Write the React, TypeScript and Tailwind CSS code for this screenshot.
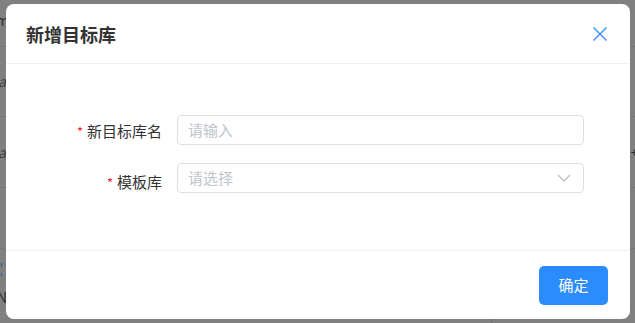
import React from "react";

export default function App() {
  const font = { fontFamily: '"Noto Sans CJK SC", "Noto Sans", sans-serif' };
  return (
    <div
      className="relative w-[635px] h-[323px] overflow-hidden bg-[#808080]"
      style={font}
    >
      {/* background page (behind overlay) */}
      <div className="flex flex-col w-full">
        <div className="h-[47px] border-b border-[#747474] flex items-start pt-[10px]">
          <span className="ml-[-4px] text-[14px] text-[#2e2e2e]">m</span>
          <div className="ml-auto mr-[143px] h-[47px] border-l border-[#747474]" />
        </div>
        <div className="h-[70px] border-b border-[#747474] flex items-center">
          <span className="ml-[-2px] text-[14px] text-[#3a3a3a] italic">a</span>
        </div>
        <div className="h-[71px] border-b border-[#747474] flex items-center justify-between">
          <span className="ml-[-2px] text-[14px] text-[#3a3a3a] italic">a</span>
          <span className="mr-[-3px] text-[13px] text-[#2e2e2e]">+</span>
        </div>
        <div className="h-[61px] border-b border-[#747474]" />
        <div className="h-[74px] relative flex flex-col">
          <span className="mt-[14px] ml-[1px] w-[1px] h-[4px] bg-[#2d5a8a]" />
          <span className="mt-[6px] ml-[1px] w-[1px] h-[3px] bg-[#2d5a8a]" />
          <span className="mt-[14px] ml-[-3px] text-[14px] leading-none text-[#2e2e2e]">N</span>
          <div className="absolute left-[491px] top-[68px] h-[8px] border-l border-[#747474]" />
        </div>
      </div>

      {/* modal */}
      <div className="absolute left-[6px] top-[4px] w-[624px] h-[315px] rounded-[8px] bg-white flex flex-col">
        {/* header */}
        <div className="h-[60px] border-b border-[#f0f0f0] flex items-center justify-between pl-[20px] pr-[22px]">
          <span className="text-[18px] font-bold text-[#333333] leading-none">新增目标库</span>
          <svg width="16" height="16" viewBox="0 0 16 16" className="mr-[0px]">
            <path d="M1.5 1.5 L14.5 14.5 M14.5 1.5 L1.5 14.5" stroke="#3a8ef6" strokeWidth="1.4" fill="none" />
          </svg>
        </div>
        {/* body */}
        <div className="h-[186px] pt-[51px] flex flex-col gap-[18px]">
          <div className="flex items-center">
            <div className="w-[171px] pr-[15px] text-right text-[15px] text-[#333333] translate-y-[1px]">
              <span className="text-[#f5222d] mr-[4px] text-[13px]">*</span>新目标库名
            </div>
            <div className="w-[407px] h-[30px] border border-[#dcdfe6] rounded-[4px] flex items-center px-[10px] text-[15px] text-[#c0c4cc]">
              请输入
            </div>
          </div>
          <div className="flex items-center">
            <div className="w-[171px] pr-[15px] text-right text-[15px] text-[#333333] translate-y-[4px]">
              <span className="text-[#f5222d] mr-[4px] text-[13px]">*</span>模板库
            </div>
            <div className="w-[407px] h-[30px] border border-[#dcdfe6] rounded-[4px] flex items-center justify-between pl-[10px] pr-[12px] text-[15px] text-[#c0c4cc]">
              <span>请选择</span>
              <svg width="14" height="8" viewBox="0 0 14 8">
                <path d="M1 1 L7 7 L13 1" stroke="#b4b8c0" strokeWidth="1.2" fill="none" />
              </svg>
            </div>
          </div>
        </div>
        {/* footer */}
        <div className="flex-1 border-t border-[#f0f0f0] flex items-start justify-end pt-[15px] pr-[22px]">
          <button className="w-[69px] h-[39px] rounded-[5px] bg-[#2b8cff] text-white text-[15px] flex items-center justify-center">
            确定
          </button>
        </div>
      </div>
    </div>
  );
}
